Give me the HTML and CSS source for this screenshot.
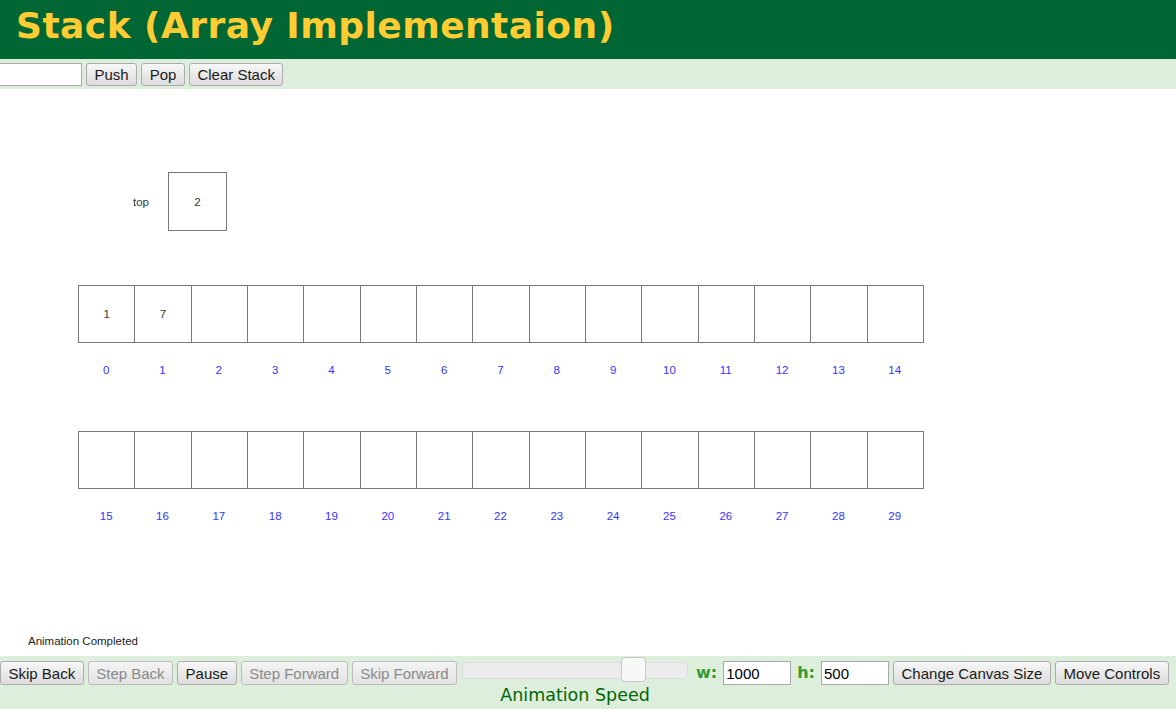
FILE: index.html
```html
<!DOCTYPE html>
<html>
<head>
<meta charset="utf-8">
<title>Stack (Array Implementaion)</title>
<link rel="stylesheet" href="styles.css">
</head>
<body>
<header class="header">
  <h1 class="title">Stack (Array Implementaion)</h1>
</header>
<div class="algo-controls">
  <input class="text-input push-input" type="text">
  <button class="btn">Push</button>
  <button class="btn">Pop</button>
  <button class="btn">Clear Stack</button>
</div>
<main class="canvas">
  <div class="top-row">
    <span class="top-label">top</span>
    <div class="top-box">2</div>
  </div>
  <div class="array first-array">
    <div class="cell">1</div><div class="cell">7</div><div class="cell"></div><div class="cell"></div><div class="cell"></div>
    <div class="cell"></div><div class="cell"></div><div class="cell"></div><div class="cell"></div><div class="cell"></div>
    <div class="cell"></div><div class="cell"></div><div class="cell"></div><div class="cell"></div><div class="cell"></div>
  </div>
  <div class="indices">
    <span>0</span><span>1</span><span>2</span><span>3</span><span>4</span><span>5</span><span>6</span><span>7</span><span>8</span><span>9</span><span>10</span><span>11</span><span>12</span><span>13</span><span>14</span>
  </div>
  <div class="array second-array">
    <div class="cell"></div><div class="cell"></div><div class="cell"></div><div class="cell"></div><div class="cell"></div>
    <div class="cell"></div><div class="cell"></div><div class="cell"></div><div class="cell"></div><div class="cell"></div>
    <div class="cell"></div><div class="cell"></div><div class="cell"></div><div class="cell"></div><div class="cell"></div>
  </div>
  <div class="indices">
    <span>15</span><span>16</span><span>17</span><span>18</span><span>19</span><span>20</span><span>21</span><span>22</span><span>23</span><span>24</span><span>25</span><span>26</span><span>27</span><span>28</span><span>29</span>
  </div>
  <div class="status">Animation Completed</div>
</main>
<footer class="general-controls">
  <button class="btn">Skip Back</button>
  <button class="btn" disabled>Step Back</button>
  <button class="btn">Pause</button>
  <button class="btn" disabled>Step Forward</button>
  <button class="btn" disabled>Skip Forward</button>
  <div class="speed">
    <div class="slider"><span class="thumb"></span></div>
    <div class="speed-label">Animation Speed</div>
  </div>
  <label class="dim-label">w:</label>
  <input class="text-input dim-input" type="text" value="1000">
  <label class="dim-label">h:</label>
  <input class="text-input dim-input" type="text" value="500">
  <button class="btn">Change Canvas Size</button>
  <button class="btn">Move Controls</button>
</footer>
</body>
</html>
```

FILE: styles.css
```css
html, body {
  margin: 0;
  padding: 0;
  background: #ffffff;
  overflow: hidden;
}

body {
  font-family: "Liberation Sans", Arial, sans-serif;
  width: 1176px;
  height: 709px;
}

.header {
  background: #006633;
  height: 59px;
  display: flex;
  align-items: flex-start;
}

.title {
  margin: 0 0 0 16px;
  font-family: "DejaVu Sans", Verdana, sans-serif;
  font-weight: bold;
  font-size: 36px;
  line-height: 51px;
  color: #ffcc33;
  letter-spacing: 0.47px;
}

.algo-controls {
  background: #ddeedd;
  height: 30px;
  display: flex;
  align-items: flex-start;
  gap: 4px;
  padding-top: 4px;
  box-sizing: border-box;
}

.text-input {
  box-sizing: border-box;
  height: 23px;
  border: 1px solid #a9a9a9;
  background: #ffffff;
  font-family: "Liberation Sans", Arial, sans-serif;
  font-size: 15px;
  padding: 0 2px;
  margin: 0;
  outline: none;
}

.push-input {
  width: 150px;
  margin-left: -68px;
}

.btn {
  box-sizing: border-box;
  height: 23px;
  margin: 0;
  padding: 0 7.5px;
  font-family: "Liberation Sans", Arial, sans-serif;
  font-size: 15px;
  color: #1a1a1a;
  background: linear-gradient(#f7f7f7, #dcdcdc);
  border: 1px solid #acacac;
  border-radius: 3px;
  line-height: 21px;
  white-space: nowrap;
}

.btn:disabled {
  color: #8a8a8a;
  background: linear-gradient(#f4f4f4, #e2e2e2);
  border-color: #bdbdbd;
}

.canvas {
  height: 567px;
  display: flex;
  flex-direction: column;
  font-family: "Liberation Sans", Arial, sans-serif;
  font-size: 11.5px;
  color: #333333;
}

.top-row {
  display: flex;
  align-items: center;
  margin: 83px 0 0 133px;
}

.top-label {
  width: 35px;
  color: #333333;
}

.top-box {
  box-sizing: border-box;
  width: 59px;
  height: 59px;
  border: 1px solid #777777;
  display: flex;
  align-items: center;
  justify-content: center;
}

.array {
  display: flex;
  margin-left: 78px;
}

.first-array {
  margin-top: 54px;
}

.second-array {
  margin-top: 55px;
}

.cell {
  box-sizing: border-box;
  flex: 0 0 57.33px;
  height: 58px;
  border: 1px solid #777777;
  margin-left: -1px;
  display: flex;
  align-items: center;
  justify-content: center;
}

.cell:first-child {
  margin-left: 0;
}

.indices {
  display: flex;
  margin: 21px 0 0 78px;
  line-height: 12px;
  color: #3333ff;
}

.indices span {
  flex: 0 0 56.33px;
  text-align: center;
}

.status {
  margin: auto 0 0 28px;
  line-height: 12px;
  padding-bottom: 9px;
  color: #222222;
}

.general-controls {
  background: #ddeedd;
  height: 60px;
  display: flex;
  align-items: flex-start;
  gap: 4px;
  padding-top: 5px;
  box-sizing: border-box;
}

.general-controls .btn {
  height: 24px;
}

.speed {
  width: 226px;
  margin: 0 4px 0 1px;
  display: flex;
  flex-direction: column;
  align-items: center;
}

.slider {
  position: relative;
  box-sizing: border-box;
  width: 226px;
  height: 17px;
  margin-top: 1px;
  background: #ececec;
  border: 1px solid #dddddd;
  border-radius: 5px;
}

.thumb {
  position: absolute;
  left: 158px;
  top: -6px;
  box-sizing: border-box;
  width: 25px;
  height: 25px;
  background: #f8f8f8;
  border: 1px solid #c8c8c8;
  border-radius: 4px;
}

.speed-label {
  margin-top: 6px;
  font-family: "DejaVu Sans", Verdana, sans-serif;
  font-size: 17.5px;
  color: #006600;
  line-height: 20px;
  white-space: nowrap;
}

.dim-label {
  font-family: "DejaVu Sans", Verdana, sans-serif;
  font-weight: bold;
  font-size: 16px;
  color: #339933;
  line-height: 24px;
}

.dim-input {
  width: 68px;
  height: 24px;
  margin-left: 2px;
}

.dim-input + .dim-label {
  margin-left: 2px;
}
```
